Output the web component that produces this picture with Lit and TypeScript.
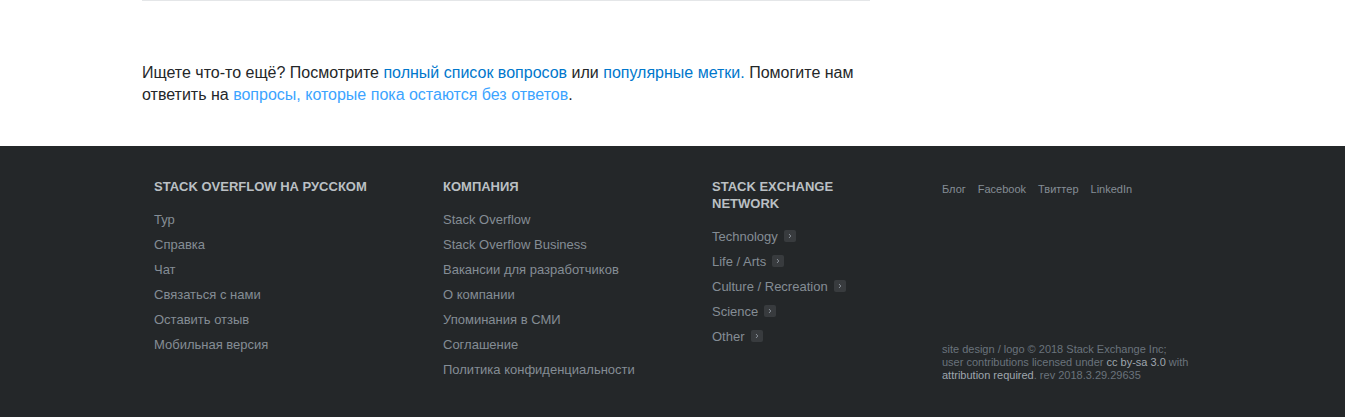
import { LitElement, html, css } from "lit";
import { customElement } from "lit/decorators.js";

const siteLinks = ["Тур", "Справка", "Чат", "Связаться с нами", "Оставить отзыв", "Мобильная версия"];
const companyLinks = [
  "Stack Overflow",
  "Stack Overflow Business",
  "Вакансии для разработчиков",
  "О компании",
  "Упоминания в СМИ",
  "Соглашение",
  "Политика конфиденциальности",
];
const networkLinks = ["Technology", "Life / Arts", "Culture / Recreation", "Science", "Other"];
const socialLinks = ["Блог", "Facebook", "Твиттер", "LinkedIn"];

@customElement("app-root")
export class AppRoot extends LitElement {
  static styles = css`
    :host {
      display: block;
      background: #fff;
      color: #242729;
      font-family: "Liberation Sans", Arial, sans-serif;
      font-size: 13px;
      line-height: 17px;
    }
    a {
      color: inherit;
      text-decoration: none;
    }
    .container {
      box-sizing: border-box;
      max-width: 1061px;
      margin: 0 auto;
    }
    .main {
      max-width: 728px;
      padding-bottom: 40px;
      border-top: 1px solid #e4e6e8;
    }
    .hint {
      margin: 0;
      padding-top: 61px;
      font-size: 16px;
      line-height: 22px;
      font-weight: 400;
    }
    .hint a {
      color: #0077cc;
    }
    .hint .unanswered {
      color: #3ca4ff;
    }
    .footer {
      background: #242729;
      color: #848d95;
    }
    .columns {
      display: grid;
      grid-template-columns: 289fr 269fr 230fr 249fr;
      padding: 32px 12px 36px;
    }
    .title {
      margin: 0 0 12px;
      max-width: 230px;
      color: #bbc0c4;
      font-size: 13px;
      line-height: 17px;
      font-weight: 700;
      text-transform: uppercase;
    }
    .narrow {
      max-width: 150px;
    }
    .list {
      display: flex;
      flex-direction: column;
      margin: 0;
      padding: 0;
      list-style: none;
    }
    .list li {
      display: flex;
      align-items: center;
      gap: 6px;
      padding: 4px 0;
    }
    .expand {
      display: flex;
      align-items: center;
      justify-content: center;
      width: 12px;
      height: 12px;
      margin: 0 0 2px;
      padding: 0;
      border: 0;
      border-radius: 2px;
      background: #383b3e;
      color: #9199a1;
    }
    .side {
      display: flex;
      flex-direction: column;
      justify-content: space-between;
      font-size: 11px;
      line-height: 13px;
    }
    .social {
      display: flex;
      gap: 12px;
      margin: 0;
      padding: 5px 0;
      list-style: none;
    }
    .legal {
      margin: 0;
      color: #6a737c;
      white-space: nowrap;
    }
    .legal a {
      color: #9fa6ad;
    }
  `;

  private column(title: string, links: string[]) {
    return html`
      <nav aria-label=${title}>
        <h2 class="title">${title}</h2>
        <ul class="list">
          ${links.map((label) => html`<li><a href="#">${label}</a></li>`)}
        </ul>
      </nav>
    `;
  }

  render() {
    return html`
      <div class="container">
        <main class="main">
          <h2 class="hint">
            Ищете что-то ещё? Посмотрите <a href="#">полный список вопросов</a> или
            <a href="#">популярные метки.</a> Помогите нам ответить на
            <a class="unanswered" href="#">вопросы, которые пока остаются без ответов</a>.
          </h2>
        </main>
      </div>
      <footer class="footer">
        <div class="container columns">
          ${this.column("Stack Overflow на русском", siteLinks)}
          ${this.column("Компания", companyLinks)}
          <nav aria-label="Stack Exchange Network">
            <h2 class="title narrow">Stack Exchange Network</h2>
            <ul class="list">
              ${networkLinks.map(
                (label) => html`<li>
                  <a href="#">${label}</a>
                  <button class="expand" type="button" aria-label=${label}>
                    <svg width="4" height="6" viewBox="0 0 4 6" fill="none" stroke="currentColor" stroke-width="0.9" aria-hidden="true">
                      <path d="M1 1l1.8 2-1.8 2" />
                    </svg>
                  </button>
                </li>`
              )}
            </ul>
          </nav>
          <div class="side">
            <ul class="social">
              ${socialLinks.map((label) => html`<li><a href="#">${label}</a></li>`)}
            </ul>
            <p class="legal">
              site design / logo © 2018 Stack Exchange Inc;<br />user contributions licensed under
              <a href="#">cc by-sa 3.0</a> with<br /><a href="#">attribution required</a>. rev 2018.3.29.29635
            </p>
          </div>
        </div>
      </footer>
    `;
  }
}
